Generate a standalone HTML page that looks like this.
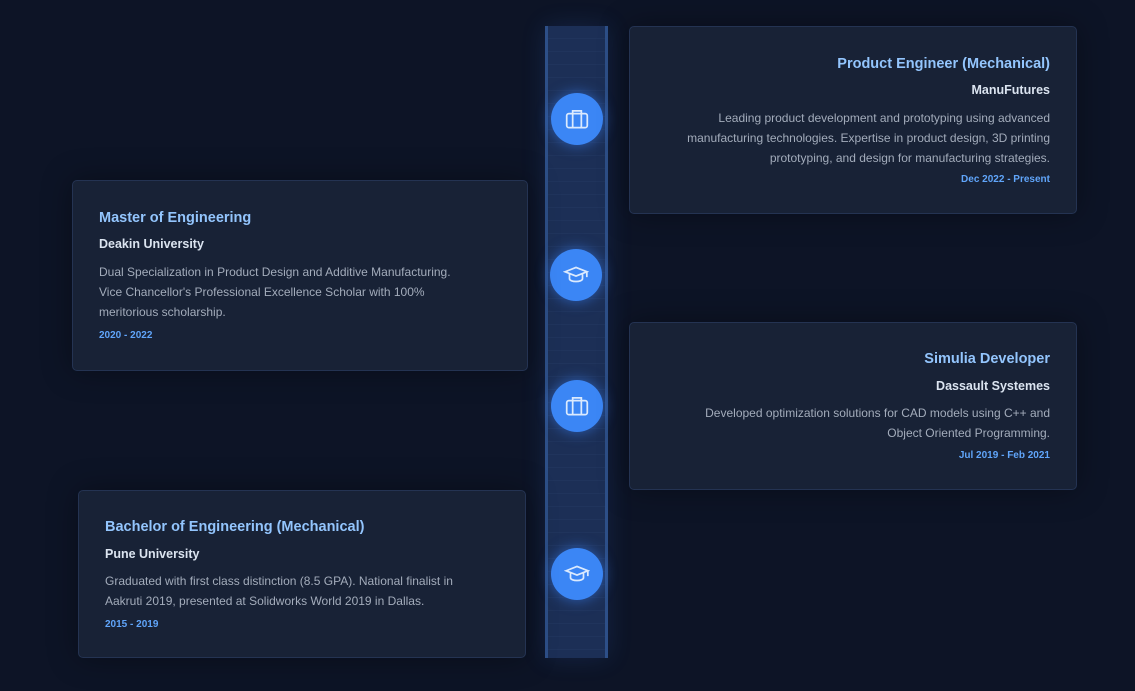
<!DOCTYPE html><html><head><style>
body{margin:0;width:1135px;height:691px;background:#0d1426;font-family:"Liberation Sans",sans-serif;position:relative;overflow:hidden}
.c{position:absolute;background:#182236;border:1px solid #243352;border-radius:5px;box-sizing:border-box;box-shadow:0 0 30px rgba(0,0,0,.35)}
.c div{position:absolute;white-space:nowrap}
.r div{right:26px;text-align:right}
.l div{left:26px}
.t{font-size:14.5px;font-weight:bold;color:#93c5fd}
.co{font-size:12.5px;font-weight:bold;color:#dbe4f0}
.d{font-size:12px;color:#a3acbb;line-height:20px}
.dt{font-size:10px;font-weight:bold;color:#60a5fa}
.bar{position:absolute;left:545px;top:26px;width:63px;height:632px;background:repeating-linear-gradient(#1c2f56 0 12px,#20345c 12px 13px);border-left:3px solid #2d4f88;border-right:3px solid #2d4f88;box-sizing:border-box;box-shadow:0 0 25px rgba(59,130,246,.15)}
.dot{position:absolute;width:52px;height:52px;border-radius:50%;background:#3b86f5;box-shadow:0 0 14px rgba(59,130,246,.6);display:flex;align-items:center;justify-content:center}
</style></head><body>
<div class="bar"></div>
<div class="dot" style="left:551px;top:93px"><svg width="26" height="26" viewBox="0 0 24 24" fill="none" stroke="#dbeafe" stroke-width="1.6"><rect x="2.5" y="7" width="19" height="13" rx="2"/><path d="M8 7V4.5h8V7M8 7v13M16 7v13"/></svg></div>
<div class="dot" style="left:550px;top:249px"><svg width="26" height="26" viewBox="0 0 24 24" fill="none" stroke="#dbeafe" stroke-width="1.6"><path d="M2 9l10-4 10 4-10 4z"/><path d="M6 11v4.5c0 1.5 3 2.5 6 2.5s6-1 6-2.5V11M22 9v5"/></svg></div>
<div class="dot" style="left:551px;top:380px"><svg width="26" height="26" viewBox="0 0 24 24" fill="none" stroke="#dbeafe" stroke-width="1.6"><rect x="2.5" y="7" width="19" height="13" rx="2"/><path d="M8 7V4.5h8V7M8 7v13M16 7v13"/></svg></div>
<div class="dot" style="left:551px;top:548px"><svg width="26" height="26" viewBox="0 0 24 24" fill="none" stroke="#dbeafe" stroke-width="1.6"><path d="M2 9l10-4 10 4-10 4z"/><path d="M6 11v4.5c0 1.5 3 2.5 6 2.5s6-1 6-2.5V11M22 9v5"/></svg></div>

<div class="c r" style="left:629px;top:26px;width:448px;height:188px">
<div class="t" style="top:29px">Product Engineer (Mechanical)</div>
<div class="co" style="top:56px">ManuFutures</div>
<div class="d" style="top:81px">Leading product development and prototyping using advanced<br>manufacturing technologies. Expertise in product design, 3D printing<br>prototyping, and design for manufacturing strategies.</div>
<div class="dt" style="top:147px">Dec 2022 - Present</div></div>

<div class="c l" style="left:72px;top:180px;width:456px;height:191px">
<div class="t" style="top:29px">Master of Engineering</div>
<div class="co" style="top:56px">Deakin University</div>
<div class="d" style="top:81px">Dual Specialization in Product Design and Additive Manufacturing.<br>Vice Chancellor's Professional Excellence Scholar with 100%<br>meritorious scholarship.</div>
<div class="dt" style="top:149px">2020 - 2022</div></div>

<div class="c r" style="left:629px;top:322px;width:448px;height:168px">
<div class="t" style="top:28px">Simulia Developer</div>
<div class="co" style="top:56px">Dassault Systemes</div>
<div class="d" style="top:80px">Developed optimization solutions for CAD models using C++ and<br>Object Oriented Programming.</div>
<div class="dt" style="top:127px">Jul 2019 - Feb 2021</div></div>

<div class="c l" style="left:78px;top:490px;width:448px;height:168px">
<div class="t" style="top:28px">Bachelor of Engineering (Mechanical)</div>
<div class="co" style="top:56px">Pune University</div>
<div class="d" style="top:80px">Graduated with first class distinction (8.5 GPA). National finalist in<br>Aakruti 2019, presented at Solidworks World 2019 in Dallas.</div>
<div class="dt" style="top:128px">2015 - 2019</div></div>
</body></html>
